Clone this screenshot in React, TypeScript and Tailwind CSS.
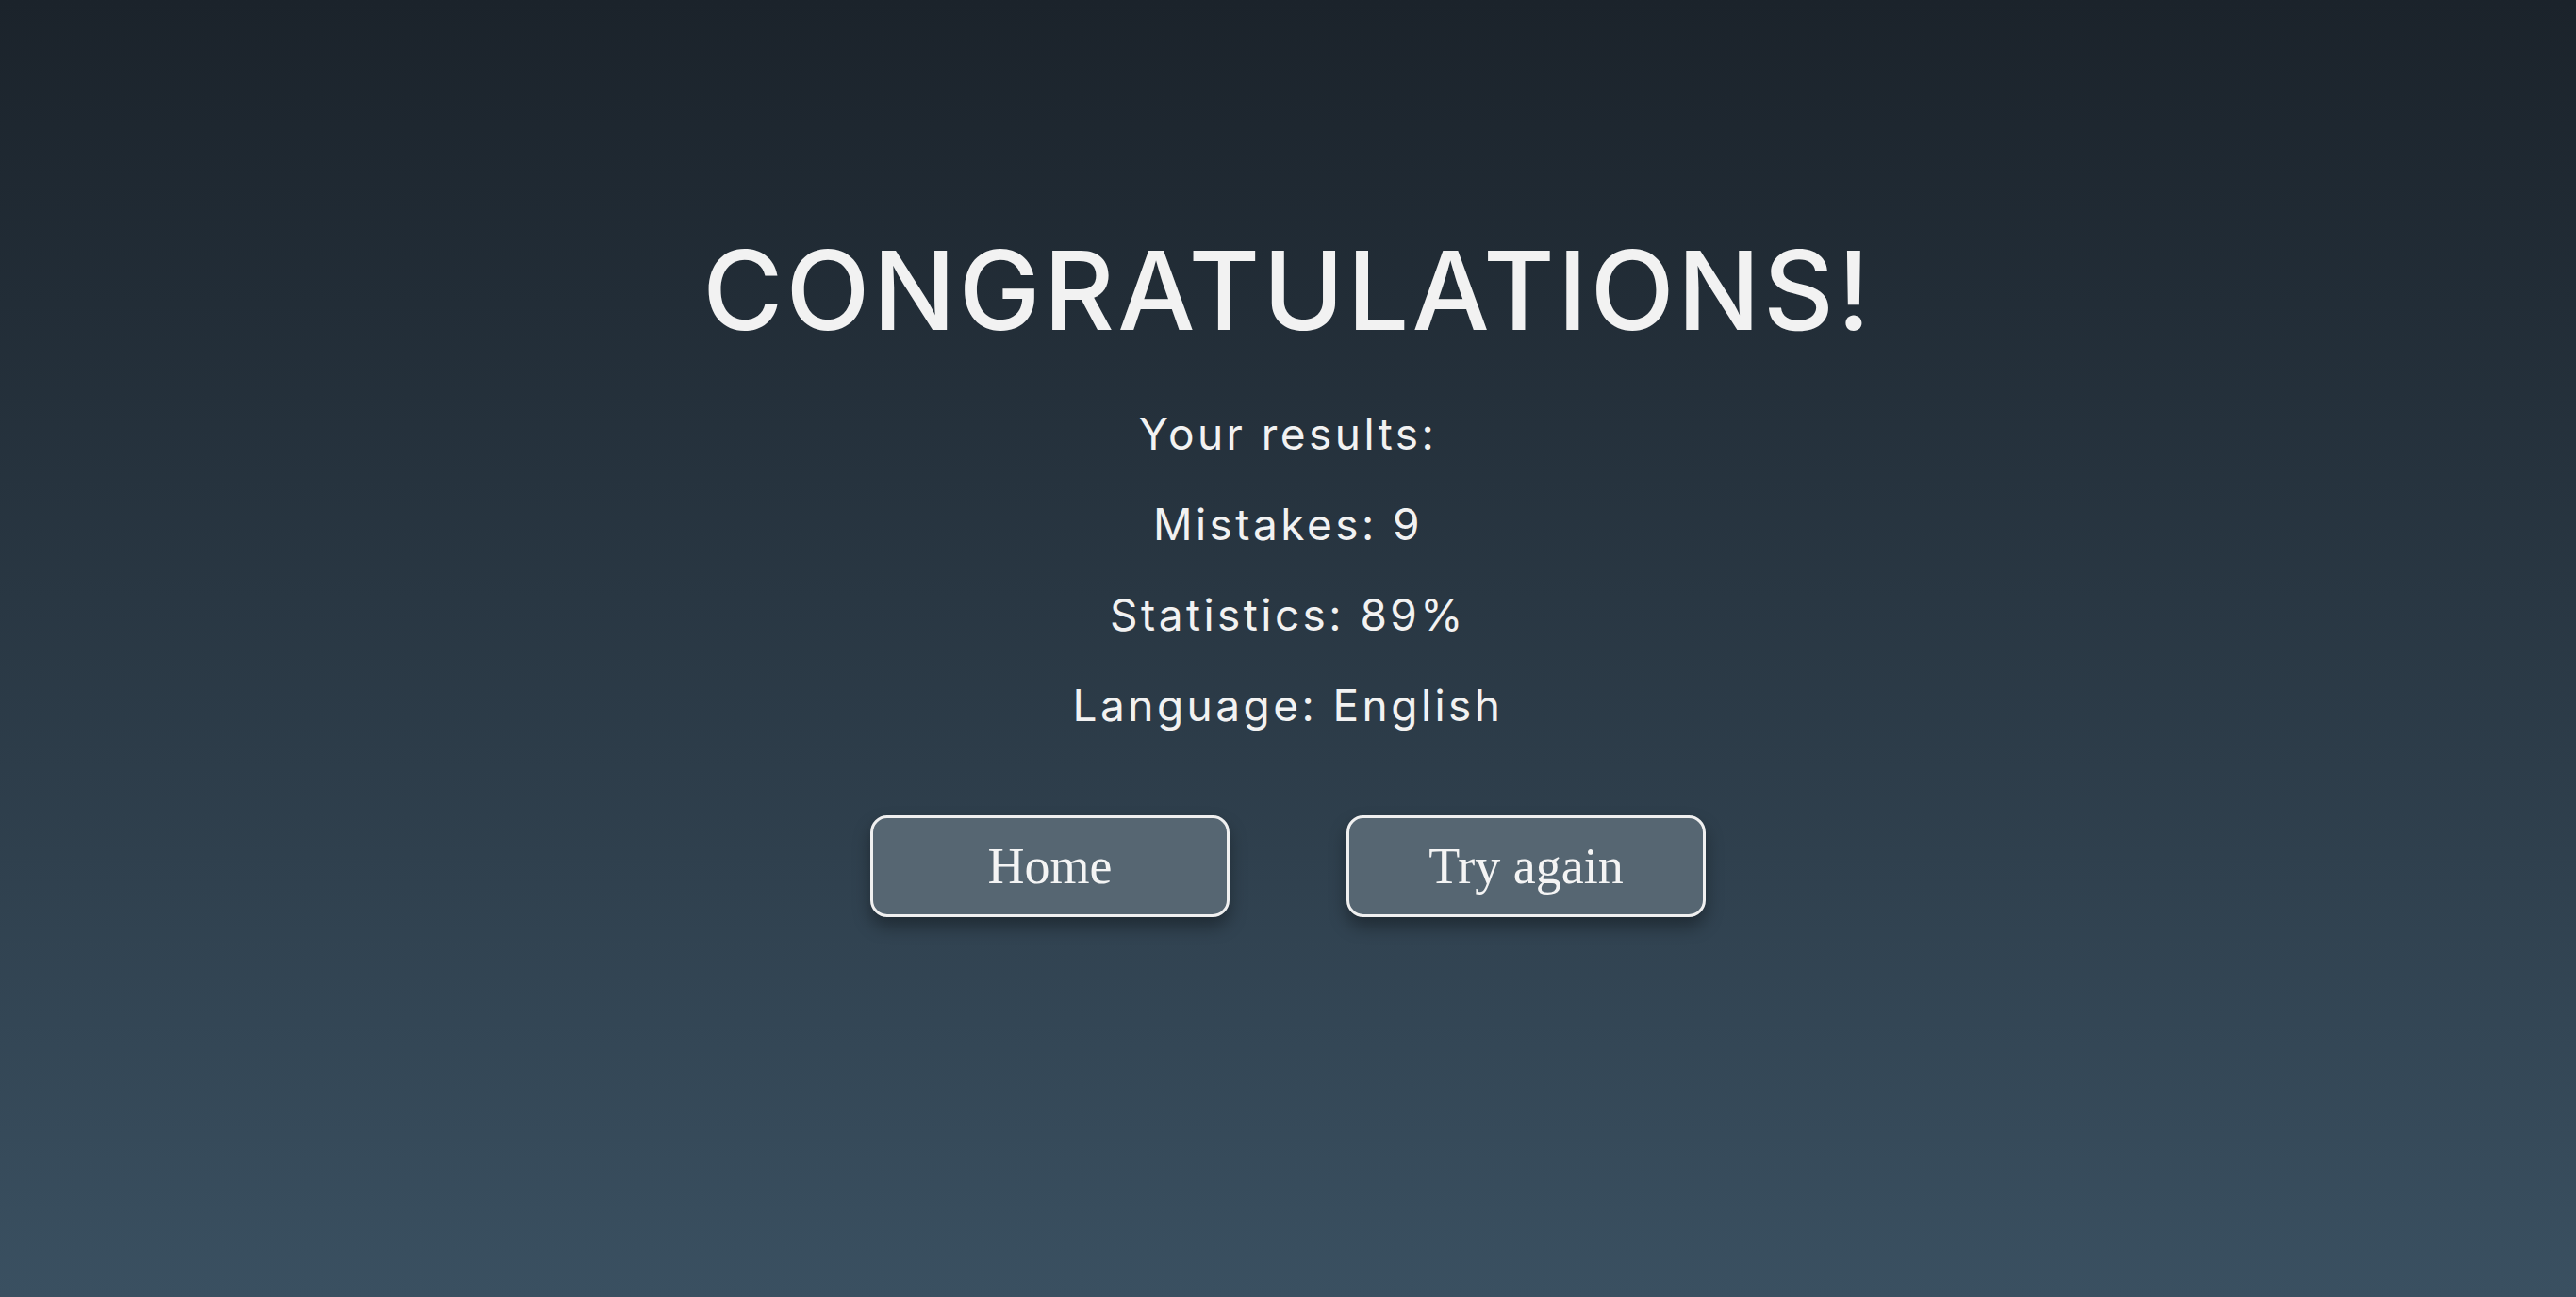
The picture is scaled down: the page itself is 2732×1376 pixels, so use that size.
const stats = [
  { label: "Mistakes", value: "9" },
  { label: "Statistics", value: "89%" },
  { label: "Language", value: "English" },
];

const ResultButton = ({ label }: { label: string }) => (
  <button
    className="w-[381px] h-[108px] rounded-[18px] border-[3px] border-[#f0f0f0]
      bg-[#566672] text-[#f4f4f4] text-[54px] leading-none
      shadow-[0_10px_18px_rgba(0,0,0,0.35)] cursor-pointer
      font-['Liberation_Serif',serif]"
  >
    {label}
  </button>
);

export default function App() {
  return (
    <div
      className="w-full min-h-[1376px] flex flex-col items-center
        bg-gradient-to-b from-[#1b232b] to-[#3a5061] text-[#f2f2f2]
        font-['Inter',sans-serif]"
    >
      <h1 className="mt-[250px] text-[116px] leading-none font-medium tracking-[0.028em]">
        CONGRATULATIONS!
      </h1>

      <div className="mt-[71px] flex flex-col items-center gap-[50px] text-[46px] leading-[46px] tracking-[0.075em]">
        <p>Your results:</p>
        {stats.map((s) => (
          <p key={s.label}>
            {s.label}: {s.value}
          </p>
        ))}
      </div>

      <div className="mt-[94px] flex flex-row gap-[124px]">
        <ResultButton label="Home" />
        <ResultButton label="Try again" />
      </div>
    </div>
  );
}
